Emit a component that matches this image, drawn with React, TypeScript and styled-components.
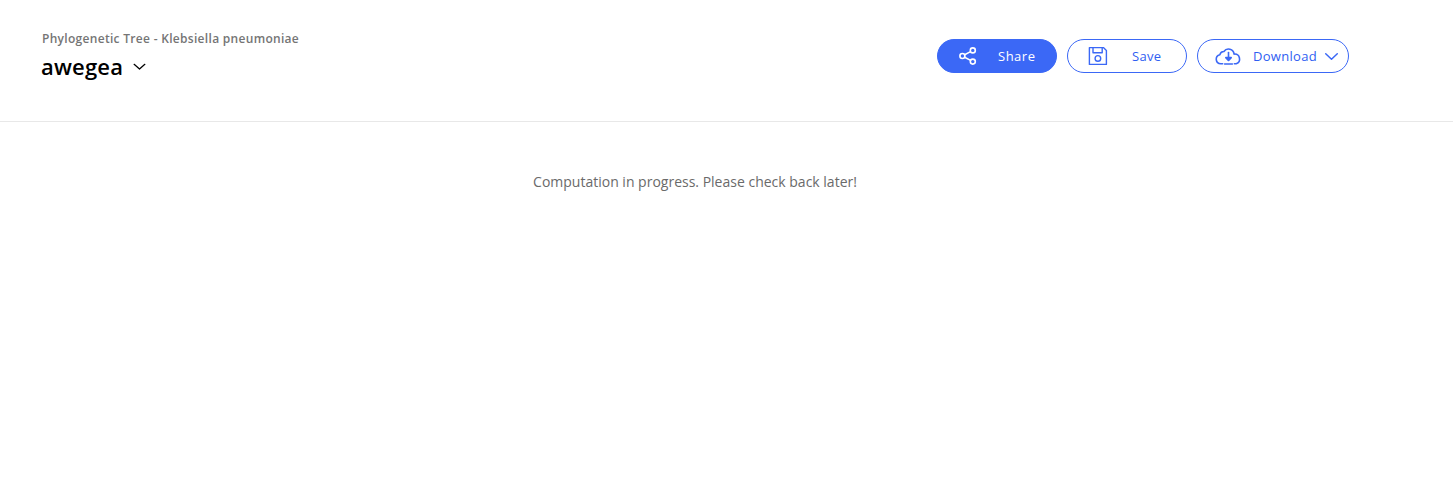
import React from "react";
import styled, { createGlobalStyle } from "styled-components";

const Global = createGlobalStyle`
  html, body { margin: 0; padding: 0; background: #fff; }
  body { font-family: "Open Sans", "Liberation Sans", sans-serif; }
`;

const Page = styled.div`
  width: 100%;
  min-height: 485px;
  background: #fff;
`;

const Header = styled.header`
  height: 121px;
  box-sizing: content-box;
  border-bottom: 1px solid #e8e8e8;
  display: flex;
  justify-content: space-between;
  align-items: flex-start;
  padding: 0 104px 0 41px;
`;

const TitleBlock = styled.div`
  display: flex;
  flex-direction: column;
  padding-top: 30px;
`;

const Subtitle = styled.div`
  font-size: 12px;
  line-height: 17px;
  font-weight: 600;
  color: #757575;
  letter-spacing: 0.3px;
  margin-left: 1px;
`;

const NameRow = styled.div`
  display: flex;
  align-items: center;
  gap: 9px;
  margin-top: 3px;
`;

const Name = styled.div`
  font-size: 22px;
  line-height: 32px;
  font-weight: 600;
  letter-spacing: 0.2px;
  color: #000;
`;

const Actions = styled.div`
  display: flex;
  gap: 10px;
  padding-top: 39px;
`;

const Button = styled.button<{ $primary?: boolean; $w: number; $pl: number; $gap: number }>`
  width: ${(p) => p.$w}px;
  height: 34px;
  box-sizing: border-box;
  border-radius: 17px;
  border: 1px solid #3b68f6;
  background: ${(p) => (p.$primary ? "#3b68f6" : "#fff")};
  color: ${(p) => (p.$primary ? "#fff" : "#2f5ef2")};
  font-family: inherit;
  font-size: 13px;
  font-weight: 500;
  letter-spacing: ${(p) => (p.$primary ? "0.5px" : "0.3px")};
  display: flex;
  align-items: center;
  gap: ${(p) => p.$gap}px;
  padding: 0 0 0 ${(p) => p.$pl}px;
`;

const ButtonChevron = styled.span`
  display: flex;
  margin-left: -4px;
`;

const Message = styled.p`
  margin: 0;
  width: 1390px;
  padding-top: 50px;
  text-align: center;
  font-size: 14px;
  line-height: 20px;
  color: #6a6a6a;
`;

const ShareIcon = () => (
  <svg width="18" height="18" viewBox="0 0 18 18" fill="none" stroke="#fff" strokeWidth="1.6">
    <circle cx="3.4" cy="9" r="2.5" />
    <circle cx="13.8" cy="3.4" r="2.5" />
    <circle cx="13.8" cy="14.6" r="2.5" />
    <path d="M5.6 7.8 11.6 4.6M5.6 10.2l6 3.2" />
  </svg>
);

const SaveIcon = () => (
  <svg width="20" height="20" viewBox="0 0 20 20" fill="none" stroke="#3b68f6" strokeWidth="1.4" strokeLinejoin="round">
    <path d="M1.4 1.6h14l3 2.8v14h-17z" />
    <path d="M5 1.6v5.2h9.2V1.6" />
    <circle cx="9.9" cy="12.4" r="2.8" />
  </svg>
);

const CloudIcon = () => (
  <svg width="27" height="20" viewBox="0 0 27 20" fill="none" stroke="#3b68f6" strokeWidth="1.6" strokeLinecap="round" strokeLinejoin="round">
    <path d="M7.6 17.8H5.8a4.6 4.6 0 0 1-.9-9.1 4 4 0 0 1 4-3.2 5.6 5.6 0 0 1 10.2 2.6 5 5 0 0 1 2.1 9.7H19.4" />
    <path d="M13.5 6.6v7.6" />
    <path d="M10.8 11.6h5.4l-2.7 2.9z" fill="#3b68f6" />
    <path d="M9.6 18h7.8" />
  </svg>
);

const Chevron = ({ size, color, w, path }: { size: number; color: string; w: number; path: string }) => (
  <svg width={size} height={size} viewBox="0 0 14 14" fill="none" stroke={color} strokeWidth={w} strokeLinecap="round" strokeLinejoin="round">
    <path d={path} />
  </svg>
);

export default function App() {
  return (
    <Page>
      <Global />
      <Header>
        <TitleBlock>
          <Subtitle>Phylogenetic Tree - Klebsiella pneumoniae</Subtitle>
          <NameRow>
            <Name>awegea</Name>
            <Chevron size={15} color="#000" w={1.2} path="M2 5l5 4.4L12 5" />
          </NameRow>
        </TitleBlock>
        <Actions>
          <Button $primary $w={120} $pl={21} $gap={21}>
            <ShareIcon />
            Share
          </Button>
          <Button $w={120} $pl={20} $gap={24}>
            <SaveIcon />
            Save
          </Button>
          <Button $w={152} $pl={17} $gap={11}>
            <CloudIcon />
            Download
            <ButtonChevron>
              <Chevron size={15} color="#3b68f6" w={1.4} path="M1.6 4.5 7 9.6l5.4-5.1" />
            </ButtonChevron>
          </Button>
        </Actions>
      </Header>
      <Message>Computation in progress. Please check back later!</Message>
    </Page>
  );
}
